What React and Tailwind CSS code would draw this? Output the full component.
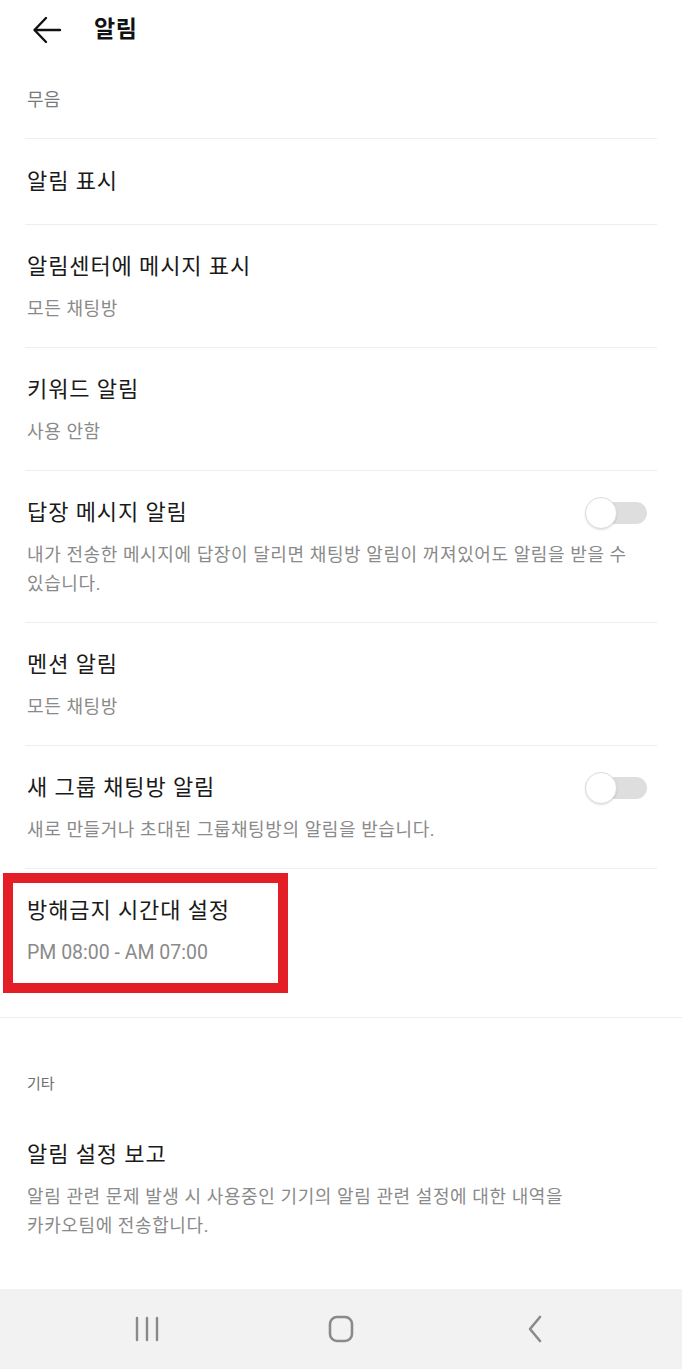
import { useState } from 'react';

const rows = [
  { title: '알림 표시' },
  { title: '알림센터에 메시지 표시', sub: '모든 채팅방' },
  { title: '키워드 알림', sub: '사용 안함' },
  {
    title: '답장 메시지 알림',
    sub: '내가 전송한 메시지에 답장이 달리면 채팅방 알림이 꺼져있어도 알림을 받을 수 있습니다.',
    toggle: true,
  },
  { title: '멘션 알림', sub: '모든 채팅방' },
  { title: '새 그룹 채팅방 알림', sub: '새로 만들거나 초대된 그룹채팅방의 알림을 받습니다.', toggle: true },
];

function Toggle({ on, onClick }) {
  return (
    <button onClick={onClick} className="relative w-[62px] h-[32px] shrink-0">
      <span className="absolute left-[6px] right-0 top-[5px] h-[22px] rounded-full bg-[#dedede]" />
      <span className="absolute left-0 top-0 w-[32px] h-[32px] rounded-full bg-white border border-[#dcdcdc] shadow-[0_1px_2px_rgba(0,0,0,0.12)]" />
    </button>
  );
}

function Row({ row }) {
  const [on, setOn] = useState(false);
  if (!row.sub) {
    return (
      <div className="border-b border-[#eeeeee] mx-[25px] px-[2px] h-[86px] flex items-center">
        <span className="text-[22px] tracking-[0.9px] text-[#1a1a1a] leading-[30px]">{row.title}</span>
      </div>
    );
  }
  return (
    <div className="mx-[25px] px-[2px] pt-[27px] pb-6 border-b border-[#eeeeee]">
      <div className="flex items-center justify-between h-[30px] pr-[8px]">
        <span className="text-[22px] tracking-[0.9px] text-[#1a1a1a] leading-[30px]">{row.title}</span>
        {row.toggle && <Toggle on={on} onClick={() => setOn(!on)} />}
      </div>
      <p className="mt-3 text-[18px] tracking-[0.6px] leading-[29px] text-[#8a8a8a] pr-[10px] break-keep">{row.sub}</p>
    </div>
  );
}

export default function App() {
  return (
    <div
      className="min-h-screen flex flex-col bg-white"
      style={{ fontFamily: 'Roboto, "Noto Sans CJK KR", sans-serif' }}
    >
      <div className="flex-1">
        {/* Header */}
        <div className="h-[60px] flex items-center">
          <button className="ml-[31px] w-[32px] h-[32px] flex items-center justify-center">
            <svg width="30" height="28" viewBox="0 0 30 28" fill="none" stroke="#111" strokeWidth="2.4" strokeLinecap="round" strokeLinejoin="round">
              <path d="M28 14H3" />
              <path d="M14 2L2.5 14L14 26" />
            </svg>
          </button>
          <h1 className="ml-[31px] text-[23px] tracking-[0.5px] font-bold text-[#111]">알림</h1>
        </div>

        {/* 무음 */}
        <div className="pt-[28px] pb-[26px] border-b border-[#eeeeee] mx-[25px] px-[2px]">
          <span className="block text-[18px] tracking-[0.3px] leading-[24px] text-[#7a7a7a]">무음</span>
        </div>

        {rows.map((r, i) => (
          <Row key={i} row={r} />
        ))}

        {/* 방해금지 */}
        <div className="relative border-b border-[#eeeeee]">
          <div className="px-[27px] pt-[27px] pb-[50px]">
            <div className="h-[30px] flex items-center">
              <span className="text-[22px] tracking-[0.9px] text-[#1a1a1a] leading-[30px]">방해금지 시간대 설정</span>
            </div>
            <p className="mt-3 text-[19.5px] leading-[29px] text-[#8a8a8a]">PM 08:00 - AM 07:00</p>
          </div>
          <div className="absolute left-[3px] top-[4px] w-[285px] h-[120px] border-[10px] border-[#e41e26]" />
        </div>

        {/* 기타 */}
        <div className="px-[27px] pt-[56px]">
          <span className="block text-[15px] leading-[20px] text-[#6f6f6f]">기타</span>
        </div>
        <div className="px-[27px] pt-[46px]">
          <div className="h-[30px] flex items-center">
            <span className="text-[22px] tracking-[0.9px] text-[#1a1a1a] leading-[30px]">알림 설정 보고</span>
          </div>
          <p className="mt-3 text-[18px] tracking-[0.6px] leading-[29px] text-[#8a8a8a] max-w-[570px] break-keep">
            알림 관련 문제 발생 시 사용중인 기기의 알림 관련 설정에 대한 내역을 카카오팀에 전송합니다.
          </p>
        </div>
      </div>

      {/* Navigation bar */}
      <div className="h-[80px] bg-[#f2f2f2] flex items-center justify-around px-[50px]">
        <div className="w-[60px] flex justify-center">
          <svg width="24" height="26" viewBox="0 0 24 26" stroke="#8a8a8a" strokeWidth="2.4" strokeLinecap="round">
            <path d="M2 2V24M12 2V24M22 2V24" />
          </svg>
        </div>
        <div className="w-[60px] flex justify-center">
          <svg width="28" height="28" viewBox="0 0 28 28" fill="none" stroke="#8a8a8a" strokeWidth="2.6">
            <rect x="3" y="2" width="22" height="24" rx="7" />
          </svg>
        </div>
        <div className="w-[60px] flex justify-center">
          <svg width="20" height="28" viewBox="0 0 20 28" fill="none" stroke="#8a8a8a" strokeWidth="2.6" strokeLinecap="round" strokeLinejoin="round">
            <path d="M15 2L5 14L15 26" />
          </svg>
        </div>
      </div>
    </div>
  );
}
